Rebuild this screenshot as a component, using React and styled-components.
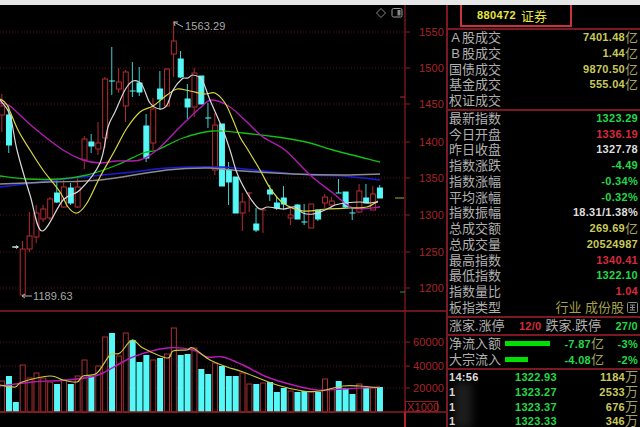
import styled, { createGlobalStyle } from "styled-components";

const GlobalStyle = createGlobalStyle`
  html, body { margin: 0; padding: 0; background: #000; overflow: hidden; }
`;

const UI_FONT = `"Liberation Sans", "Noto Sans CJK SC", sans-serif`;

const Page = styled.div`
  width: 640px;
  height: 427px;
  overflow: hidden;
  background: #000;
  font-family: ${UI_FONT};
`;
const TopStrip = styled.div`
  height: 5px;
  background: #e6e6e6;
`;
const Main = styled.div`
  display: flex;
  height: 422px;
`;
const ChartPane = styled.svg`
  display: block;
  width: 446px;
  height: 422px;
  flex: none;
`;
const Sidebar = styled.div`
  flex: 1;
  border-left: 2px solid #7c1822;
  display: flex;
  flex-direction: column;
  overflow: hidden;
`;
const Header = styled.div`
  height: 23px;
  flex: none;
`;
const CodeBox = styled.div`
  box-sizing: border-box;
  position: relative;
  margin: -2px 0 0 12px;
  width: 112px;
  height: 24px;
  border: 2px solid #c8323a;
  background: #000;
  display: flex;
  align-items: center;
  gap: 5px;
  padding-left: 15px;
  color: #e8e83c;
  font-size: 11px;
  font-weight: 700;
  letter-spacing: 0.4px;
  span { font-size: 13px; font-weight: 400; letter-spacing: 0; }
`;
const Section = styled.div`
  border-top: 2px solid #7c1822;
  flex: none;
  position: relative;
`;
const Row = styled.div`
  height: ${(p) => p.$h || 15.75}px;
  line-height: ${(p) => p.$h || 15.75}px;
  display: flex;
  align-items: center;
  justify-content: space-between;
  padding: 0 2px 0 1px;
  white-space: nowrap;
`;
const Label = styled.span`
  color: #b0b0b0;
  font-size: 13px;
`;
const Letter = styled.i`
  display: inline-block;
  width: 13px;
  text-align: center;
  font-style: normal;
  font-weight: 400;
  font-size: 13px;
`;
const TONES = {
  yellow: "#c9c95a",
  green: "#22d84a",
  red: "#d62a3c",
  white: "#dedede",
};
const Value = styled.span`
  color: ${(p) => TONES[p.$tone]};
  font-size: 11px;
  font-weight: 700;
  letter-spacing: 0.3px;
  display: flex;
  align-items: center;
`;
const Unit = styled.span`
  color: #a5a560;
  font-size: 13px;
  font-weight: 400;
  letter-spacing: 0;
`;
const TypeText = styled.span`
  color: #a5a04a;
  font-size: 13px;
  display: flex;
  align-items: center;
  gap: 3px;
`;
const CountRow = styled(Row)`
  justify-content: flex-start;
`;
const Count = styled(Value)`
  margin-left: auto;
  margin-right: 4px;
  &:last-child { margin-right: 0; }
`;
const Flow = styled.div`
  display: grid;
  grid-template-columns: 56px 62px 37px 34px;
  align-items: center;
  height: 16px;
  line-height: 16px;
  padding-left: 1px;
  white-space: nowrap;
  ${Value} { justify-content: flex-end; }
`;
const FlowBar = styled.div`
  height: 5px;
  width: ${(p) => p.$w}px;
  background: #00e000;
`;
const TickList = styled(Section)`
  padding-top: 0.5px;
`;
const Tick = styled.div`
  display: grid;
  grid-template-columns: 66px 56px 1fr;
  align-items: center;
  height: 14.7px;
  line-height: 12px;
  padding: 0 2px 0 1px;
  white-space: nowrap;
  ${Value}:last-child { justify-content: flex-end; }
  ${Unit} { line-height: 12px; }
`;
const Smudge = styled.div`
  position: absolute;
  left: 6px;
  top: 12px;
  width: 18px;
  height: 46px;
  background: rgba(130, 130, 130, 0.22);
  filter: blur(4px);
`;

// [bodyTop, bodyBottom, high, low, colour] in page pixels, read off the chart
const R = "r";
const C = "c";
const CANDLES = [
  [106, 115, 94, 132, R], [115, 145, 105, 153, C], [247, 247.6, 247, 248, C], [249, 295, 241, 296, R],
  [236, 249, 212, 252, R], [213, 237, 205, 243, R], [209, 219, 205, 222, R], [199, 218, 197, 220, R],
  [193, 202, 180, 203, C], [187, 207, 180, 208, R], [188, 203, 183, 205, C], [187, 207, 178, 208, R],
  [139, 160, 136, 169, R], [142, 146, 134, 153, C], [143, 149, 122, 155, R], [79, 138, 77, 148, R],
  [81, 82, 47, 95, C], [82, 89, 68, 93, R], [72, 106, 70, 122, R], [91, 92, 62, 97, C],
  [83, 92, 67, 96, C], [126, 158, 114, 162, C], [109, 143, 98, 150, R], [89, 99, 71, 110, C],
  [69, 106, 68, 107, R], [41, 54, 21, 77, R], [59, 77, 51, 78, C], [99, 107, 84, 119, C],
  [73, 107, 68, 117, R], [76, 104, 76, 104, C], [118, 119, 103, 128, C], [125, 170, 113, 175, R],
  [124, 186, 124, 186, C], [170, 182, 162, 205, C], [177, 213, 177, 213, C], [202, 213, 193, 231, R],
  [193, 194, 192, 212, R], [224, 230, 208, 232, C], [210, 211, 210, 233, R], [190, 194, 185, 201, C],
  [203, 208, 197, 210, C], [198, 204, 186, 210, C], [215, 218, 207, 225, R], [205, 219, 204, 219, C],
  [222, 223, 204, 225, C], [204, 228, 204, 228, R], [210, 219, 210, 221, C], [197, 203, 194, 208, R],
  [201, 205, 197, 208, R], [193, 194, 179, 193, C], [192, 207, 192, 208, C], [213, 214, 208, 220, C],
  [191, 212, 184, 213, R], [198, 203, 184, 203, C], [194, 210, 186, 210, R], [188, 198, 185, 198, C],
];

// bar tops of the volume panel, same order as CANDLES
const VOLUME = [
  381, 376, 402, 365, 378, 373, 378, 382, 384, 380, 384, 376, 360, 376, 366, 337, 333, 356, 333, 340,
  362, 355, 360, 358, 354, 328, 355, 354, 348, 369, 374, 363, 366, 376, 376, 373, 384, 384, 383, 382,
  392, 388, 391, 392, 391, 392, 392, 379, 389, 381, 388, 394, 384, 388, 388, 387,
];

const MA5 = [[0,100],[10,115],[17,150],[30,195],[42,231],[63,200],[80,190],[100,163],[108,127],[115,112],[125,90],[133,81],[142,85],[150,103],[160,109],[167,105],[173,90],[182,79],[188,78],[193,75],[202,80],[210,100],[223,130],[230,150],[237,173],[247,193],[257,207],[262,209],[268,207],[283,209],[295,207],[303,213],[313,214],[325,210],[335,205],[345,203],[360,202],[370,203],[378,202]];
const MA10 = [[0,99],[7,105],[18,130],[30,150],[43,170],[60,192],[68,207],[77,213],[87,203],[100,177],[115,150],[127,128],[140,112],[153,106],[167,95],[177,89],[190,91],[205,94],[215,93],[225,103],[233,120],[240,137],[248,150],[260,170],[270,188],[283,203],[303,211],[327,209],[350,208],[367,207],[378,201]];
const MA20 = [[0,103],[10,106],[33,127],[63,150],[83,160],[100,163],[117,161],[140,160],[157,150],[180,127],[200,108],[212,100],[230,107],[247,122],[263,137],[285,150],[310,175],[333,193],[353,208],[380,207]];
const MA30 = [[0,176],[27,179],[60,179],[87,175],[117,165],[143,153],[157,150],[183,138],[213,131],[243,133],[277,137],[310,143],[333,150],[380,162]];
const MA60 = [[0,187],[33,183],[83,177],[133,172],[167,168],[220,167],[273,172],[310,175],[343,176],[380,180]];
const MA120 = [[0,184],[50,182],[100,180],[167,170],[210,168],[243,171],[293,174],[343,175],[380,174]];
const VOL_MA5 = [[0,385],[15,387],[22,382],[50,376],[63,380],[77,382],[83,376],[97,373],[110,355],[120,353],[132,340],[143,348],[167,358],[173,351],[187,350],[193,348],[210,360],[227,367],[243,372],[277,385],[303,391],[320,391],[343,386],[360,386],[380,388]];
const VOL_MA10 = [[0,386],[33,382],[67,380],[90,377],[103,373],[133,357],[167,348],[193,350],[207,357],[223,357],[243,365],[267,377],[293,385],[317,390],[343,389],[380,387]];

const PRICE_AXIS = [[1550, 32], [1500, 68], [1450, 104], [1400, 142], [1350, 178], [1300, 215], [1250, 252], [1200, 288]];
const VOL_AXIS = [[60000, 342], [40000, 366], [20000, 388]];

const RED = "#b42c30";
const CYAN = "#55f7f7";
const AXIS = "#8e1c24";
const AXIS_TEXT = "#a92428";
const barLeft = (i) => -0.9 + 6.87 * i;

// catmull-rom through the points, the averages in the picture are smooth curves
function curve(pts) {
  let d = `M${pts[0][0]} ${pts[0][1]}`;
  for (let i = 0; i < pts.length - 1; i++) {
    const p0 = pts[i - 1] || pts[i];
    const p1 = pts[i];
    const p2 = pts[i + 1];
    const p3 = pts[i + 2] || p2;
    const c1x = p1[0] + (p2[0] - p0[0]) / 6;
    const c1y = p1[1] + (p2[1] - p0[1]) / 6;
    const c2x = p2[0] - (p3[0] - p1[0]) / 6;
    const c2y = p2[1] - (p3[1] - p1[1]) / 6;
    d += `C${c1x.toFixed(1)} ${c1y.toFixed(1)} ${c2x.toFixed(1)} ${c2y.toFixed(1)} ${p2[0]} ${p2[1]}`;
  }
  return d;
}

function Candle({ i, data }) {
  const [top, bottom, high, low, kind] = data;
  const x = barLeft(i);
  const mid = x + 2.75;
  const color = kind === R ? RED : CYAN;
  const wick = kind === R ? RED : "#3fd0d0";
  return (
    <g>
      <line x1={mid} x2={mid} y1={high} y2={low} stroke={wick} strokeWidth="1" />
      {bottom - top <= 2 ? (
        <line x1={x} x2={x + 6} y1={top} y2={top} stroke={color} strokeWidth="1" />
      ) : (
        <rect
          x={x + 0.5}
          y={top}
          width="5"
          height={bottom - top}
          fill={kind === R ? "#000" : color}
          stroke={color}
          strokeWidth="1"
        />
      )}
    </g>
  );
}

function Line({ pts, color, width = 1.2 }) {
  return <path d={curve(pts)} fill="none" stroke={color} strokeWidth={width} strokeLinejoin="round" />;
}

function AxisLabel({ x, y, children, color = AXIS_TEXT }) {
  return (
    <text x={x} y={y} fill={color} fontSize="11" fontFamily="Liberation Sans, sans-serif" letterSpacing="0.1">
      {children}
    </text>
  );
}

function Chart() {
  return (
    <ChartPane viewBox="0 5 446 422">
      {[...PRICE_AXIS, ...VOL_AXIS].map(([v, y]) => (
        <g key={v}>
          <line x1="0" x2="405" y1={y} y2={y} stroke="#5c1218" strokeDasharray="1 2" />
          <line x1="405" x2="410" y1={y} y2={y} stroke={AXIS} />
        </g>
      ))}

      {CANDLES.map((c, i) => (
        <Candle key={i} i={i} data={c} />
      ))}
      <Line pts={MA60} color="#1c1cd8" width="1.6" />
      <Line pts={MA120} color="#8c8c8c" width="1.4" />
      <Line pts={MA30} color="#12c012" width="1.3" />
      <Line pts={MA20} color="#b01cb0" width="1.4" />
      <Line pts={MA10} color="#d8d840" />
      <Line pts={MA5} color="#d8d8d8" />

      {VOLUME.map((top, i) =>
        CANDLES[i][4] === R ? (
          <rect key={i} x={barLeft(i) + 0.5} y={top} width="5" height={412 - top} fill="#000" stroke="#a83034" />
        ) : (
          <rect key={i} x={barLeft(i)} y={top} width="6" height={412 - top} fill={CYAN} />
        )
      )}
      <Line pts={VOL_MA10} color="#b81cb8" width="1.4" />
      <Line pts={VOL_MA5} color="#c8c83c" />

      {/* high and low marks */}
      <g stroke="#b0b0b0" fill="none">
        <path d="M174 22l9 5M174 22l4 0M174 22l1 4" />
        <path d="M22 296h10M22 296l3-2M22 296l3 2" />
        <path d="M12 247h6M18 247l-2-1.500M18 247l-2 1.500" stroke="#dddddd" />
      </g>
      <AxisLabel x="185" y="30" color="#a8a8a8">1563.29</AxisLabel>
      <AxisLabel x="33" y="300" color="#a8a8a8">1189.63</AxisLabel>

      {/* panel rules */}
      <line x1="0" x2="446" y1="311" y2="311" stroke={AXIS} strokeWidth="1.5" />
      <line x1="0" x2="446" y1="412" y2="412" stroke={AXIS} strokeWidth="1.5" />
      <line x1="405" x2="405" y1="5" y2="412" stroke={AXIS} strokeWidth="1.2" />
      <line x1="405" x2="405" y1="412" y2="427" stroke="#b02028" strokeWidth="2" />

      {/* last close and range marks on the axis */}
      <line x1="400" x2="405" y1="97" y2="97" stroke="#a83030" />
      <line x1="395" x2="404" y1="198" y2="198" stroke="#a8a838" />
      <line x1="400" x2="405" y1="292" y2="292" stroke="#1c9c3c" />

      {PRICE_AXIS.map(([v, y]) => (
        <AxisLabel key={v} x="419" y={y + 4}>{v}</AxisLabel>
      ))}
      {VOL_AXIS.map(([v, y]) => (
        <AxisLabel key={v} x="413" y={y + 4}>{v}</AxisLabel>
      ))}
      <rect x="405.500" y="401.500" width="32" height="10" fill="#000" stroke={AXIS} />
      <AxisLabel x="407" y="410.500">X1000</AxisLabel>

      {/* toolbar glyphs */}
      <path d="M381 8.500l4.500 4.500-4.500 4.500-4.500-4.500z" fill="none" stroke="#8a8a8a" />
      <rect x="392" y="8.500" width="10" height="8.500" rx="1.500" fill="none" stroke="#9a9a9a" />
      <rect x="397.500" y="10" width="3" height="5.500" fill="#8a8a8a" />
    </ChartPane>
  );
}

const EXCHANGE = [
  [<><Letter>A</Letter>股成交</>, "7401.48", "亿"],
  [<><Letter>B</Letter>股成交</>, "1.44", "亿"],
  ["国债成交", "9870.50", "亿"],
  ["基金成交", "555.04", "亿"],
  ["权证成交", "", ""],
];

const INDEX = [
  ["最新指数", "1323.29", "green"],
  ["今日开盘", "1336.19", "red"],
  ["昨日收盘", "1327.78", "white"],
  ["指数涨跌", "-4.49", "green"],
  ["指数涨幅", "-0.34%", "green"],
  ["平均涨幅", "-0.32%", "green"],
  ["指数振幅", "18.31/1.38%", "white"],
  ["总成交额", "269.69", "yellow", "亿"],
  ["总成交量", "20524987", "yellow"],
  ["最高指数", "1340.41", "red"],
  ["最低指数", "1322.10", "green"],
  ["指数量比", "1.04", "red"],
];

const TICKS = [
  ["14:56", "1322.93", "1184"],
  ["1", "1323.27", "2533"],
  ["1", "1323.37", "676"],
  ["1", "1323.33", "346"],
];

export default function App() {
  return (
    <Page>
      <GlobalStyle />
      <TopStrip />
      <Main>
        <Chart />
        <Sidebar>
          <Header>
            <CodeBox>
              880472 <span>证券</span>
            </CodeBox>
          </Header>
          <Section>
            {EXCHANGE.map(([name, num, unit], i) => (
              <Row key={i}>
                <Label>{name}</Label>
                <Value $tone="yellow">
                  {num}
                  <Unit>{unit}</Unit>
                </Value>
              </Row>
            ))}
          </Section>
          <Section>
            {INDEX.map(([name, num, tone, unit]) => (
              <Row key={name}>
                <Label>{name}</Label>
                <Value $tone={tone}>
                  {num}
                  {unit && <Unit>{unit}</Unit>}
                </Value>
              </Row>
            ))}
            <Row>
              <Label>板指类型</Label>
              <TypeText>
                行业 成份股
                <svg width="11" height="11" viewBox="0 0 11 11">
                  <rect x="0.500" y="0.500" width="10" height="10" rx="1" fill="none" stroke="#8a8a8a" />
                  <path d="M3 3h5M3 5.500h5M3 8h5M5.500 3v5" stroke="#8a8a8a" />
                </svg>
              </TypeText>
            </Row>
          </Section>
          <Section>
            <CountRow $h={16}>
              <Label>涨家.涨停</Label>
              <Count $tone="red">12/0</Count>
              <Label>跌家.跌停</Label>
              <Count $tone="green">27/0</Count>
            </CountRow>
          </Section>
          <Section>
            <Flow>
              <Label>净流入额</Label>
              <FlowBar $w={45} />
              <Value $tone="green">
                -7.87<Unit>亿</Unit>
              </Value>
              <Value $tone="green">-3%</Value>
            </Flow>
            <Flow>
              <Label>大宗流入</Label>
              <FlowBar $w={23} />
              <Value $tone="green">
                -4.08<Unit>亿</Unit>
              </Value>
              <Value $tone="green">-2%</Value>
            </Flow>
          </Section>
          <TickList>
            {TICKS.map(([time, price, vol], i) => (
              <Tick key={i}>
                <Value $tone="white">{time}</Value>
                <Value $tone="green">{price}</Value>
                <Value $tone="yellow">
                  {vol}
                  <Unit>万</Unit>
                </Value>
              </Tick>
            ))}
            <Smudge />
          </TickList>
        </Sidebar>
      </Main>
    </Page>
  );
}
